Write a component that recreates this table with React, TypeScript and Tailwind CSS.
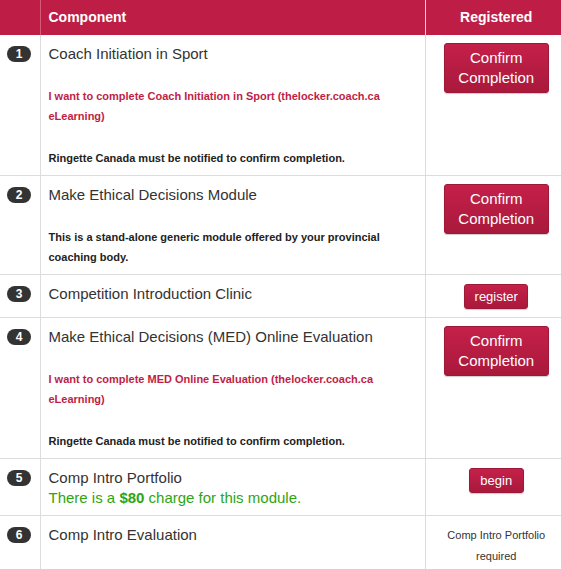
const red = "text-[#c01e45]";

type Row = {
  n: number;
  title: string;
  body?: React.ReactNode;
  action: React.ReactNode;
};

const ConfirmButton = () => (
  <button className="w-[105px] h-[50px] rounded-[3px] border border-[#9e1838] bg-gradient-to-b from-[#c52049] to-[#a9193c] text-white text-[15px] leading-[20px] shadow-[0_1px_1px_rgba(0,0,0,0.2)]">
    Confirm
    <br />
    Completion
  </button>
);

const SmallButton = ({ label, w }: { label: string; w: string }) => (
  <button
    className={`${w} mt-[1px] h-[25px] rounded-[3px] border border-[#9e1838] bg-gradient-to-b from-[#c52049] to-[#a9193c] text-white text-[13px] leading-[20px] shadow-[0_1px_1px_rgba(0,0,0,0.2)]`}
  >
    {label}
  </button>
);

const Notice = ({ what }: { what: string }) => (
  <div className="text-[11px] font-bold leading-[20px]">
    <p className={`mt-[22px] ${red}`}>
      I want to complete {what} (thelocker.coach.ca
      <br />
      eLearning)
    </p>
    <p className="mt-[22px] text-[#222]">Ringette Canada must be notified to confirm completion.</p>
  </div>
);

const rows: Row[] = [
  {
    n: 1,
    title: "Coach Initiation in Sport",
    body: <Notice what="Coach Initiation in Sport" />,
    action: <ConfirmButton />,
  },
  {
    n: 2,
    title: "Make Ethical Decisions Module",
    body: (
      <p className="mt-[22px] text-[11px] font-bold leading-[20px] text-[#222]">
        This is a stand-alone generic module offered by your provincial
        <br />
        coaching body.
      </p>
    ),
    action: <ConfirmButton />,
  },
  {
    n: 3,
    title: "Competition Introduction Clinic",
    action: <SmallButton label="register" w="w-[64px]" />,
  },
  {
    n: 4,
    title: "Make Ethical Decisions (MED) Online Evaluation",
    body: <Notice what="MED Online Evaluation" />,
    action: <ConfirmButton />,
  },
  {
    n: 5,
    title: "Comp Intro Portfolio",
    body: (
      <p className="text-[15px] leading-[20px] text-[#2ea512]">
        There is a <b>$80</b> charge for this module.
      </p>
    ),
    action: <SmallButton label="begin" w="w-[55px]" />,
  },
  {
    n: 6,
    title: "Comp Intro Evaluation",
    action: (
      <p className="text-[11px] leading-[21px] text-[#333] pt-[1px]">
        Comp Intro Portfolio
        <br />
        required
      </p>
    ),
  },
];

export default function App() {
  return (
    <div className="w-[561px] h-[569px] overflow-hidden bg-white font-['Liberation_Sans',Arial,sans-serif]">
      <table className="w-[567px] border-collapse table-fixed">
        <thead>
          <tr className="bg-[#be1e45] text-white text-[14px] font-bold h-[35px]">
            <th className="w-[40px] border-r border-[#d85a78]"></th>
            <th className="text-left pl-[8px] border-r border-[#dcdcdc]">Component</th>
            <th className="w-[142px] text-center">Registered</th>
          </tr>
        </thead>
        <tbody>
          {rows.map((r) => (
            <tr key={r.n} className="border-b border-[#dcdcdc] align-top">
              <td className="border-r border-[#dcdcdc] pt-[11px]">
                <div className="ml-[7px] w-[24px] h-[16px] rounded-full bg-[#333] text-white text-[12px] font-bold leading-[16px] text-center">
                  {r.n}
                </div>
              </td>
              <td className="border-r border-[#dcdcdc] pl-[8px] pt-[9px] pb-[7px] text-[#333]">
                <div className="text-[15px] leading-[20px]">{r.title}</div>
                {r.body}
              </td>
              <td className="text-center pt-[8px] pb-[8px]">{r.action}</td>
            </tr>
          ))}
        </tbody>
      </table>
    </div>
  );
}
